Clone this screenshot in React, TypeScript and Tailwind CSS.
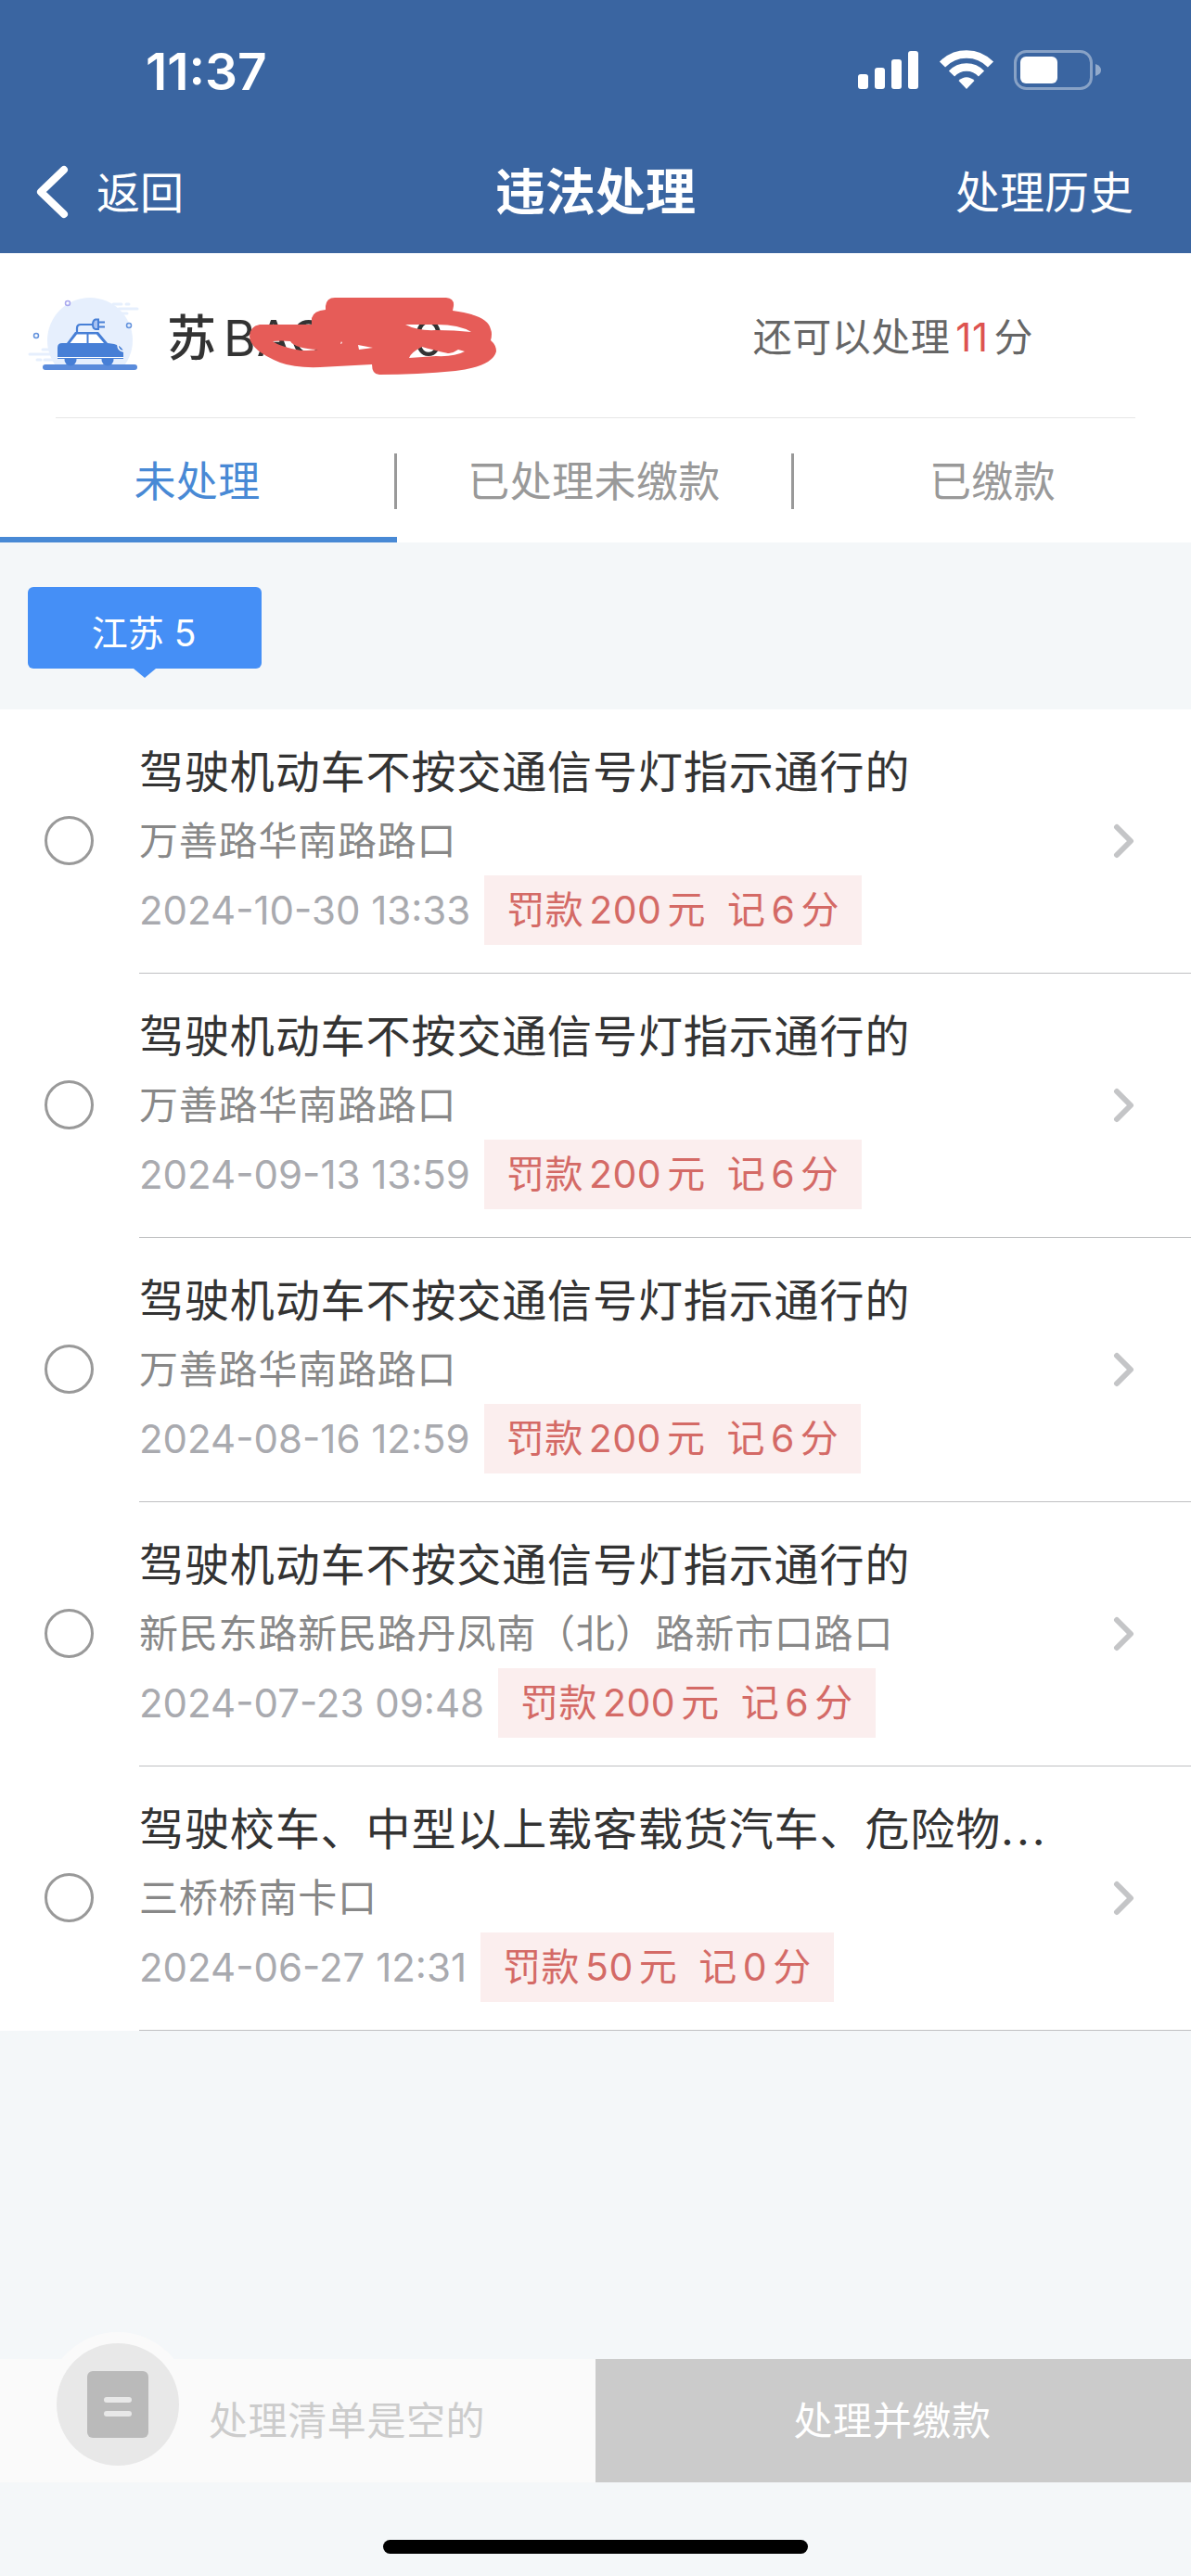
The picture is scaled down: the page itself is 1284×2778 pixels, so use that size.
import React from "react";

const records = [
  { title: "驾驶机动车不按交通信号灯指示通行的", place: "万善路华南路路口", time: "2024-10-30 13:33", fine: "200", points: "6" },
  { title: "驾驶机动车不按交通信号灯指示通行的", place: "万善路华南路路口", time: "2024-09-13 13:59", fine: "200", points: "6" },
  { title: "驾驶机动车不按交通信号灯指示通行的", place: "万善路华南路路口", time: "2024-08-16 12:59", fine: "200", points: "6" },
  { title: "驾驶机动车不按交通信号灯指示通行的", place: "新民东路新民路丹凤南（北）路新市口路口", time: "2024-07-23 09:48", fine: "200", points: "6" },
  { title: "驾驶校车、中型以上载客载货汽车、危险物", more: true, place: "三桥桥南卡口", time: "2024-06-27 12:31", fine: "50", points: "0" },
];

function StatusIcons() {
  return (
    <svg width="264" height="44" viewBox="0 0 264 44" fill="#fff">
      {/* signal */}
      <rect x="0" y="26" width="11" height="16" rx="3" />
      <rect x="18" y="19" width="11" height="23" rx="3" />
      <rect x="36" y="10" width="11" height="32" rx="3" />
      <rect x="54" y="1" width="11" height="41" rx="3" />
      {/* wifi */}
      <g fill="none" stroke="#fff" strokeWidth="8.5">
        <path d="M91 15.500 A36 36 0 0 1 143 15.500" />
        <path d="M101 25.500 A22 22 0 0 1 133 25.500" />
      </g>
      <path d="M117 42 L108.500 33 Q117 25.500 125.500 33 Z" />
      {/* battery */}
      <rect x="169.500" y="1.500" width="82" height="40" rx="12" fill="none" stroke="#fff" strokeOpacity="0.4" strokeWidth="3" />
      <rect x="175" y="7" width="40" height="29" rx="6" />
      <path d="M256 15 Q262 17 262 21.500 Q262 26 256 28 Z" fillOpacity="0.45" />
    </svg>
  );
}

function CarIcon() {
  return (
    <svg width="120" height="84" viewBox="30 320 120 84" fill="none">
      <circle cx="97" cy="367" r="46" fill="#e6effd" />
      <g stroke="#e6effd" strokeWidth="3" strokeLinecap="round">
        <path d="M122 328h9M136 328h3M128 333h20M130 338h7M32 382h28M40 388h4M48 388h10M46 377h10" />
      </g>
      <path d="M30 399h120v5H30z" fill="#fff" />
      <rect x="46" y="393" width="102" height="6" rx="3" fill="#5a8bdb" />
      <circle cx="76" cy="388" r="6.500" fill="#477fd6" />
      <circle cx="116" cy="388" r="6.500" fill="#477fd6" />
      <path d="M62 387V375q0-5 5-5h5l9-12h25l10 12q16 1 17 10v7z" fill="#477fd6" />
      <path d="M75.500 370l7.500-9.500h10.500v9.500zM95.500 370v-9.500h8.500l8 9.500z" fill="#fff" />
      <path d="M62 385.500h71" stroke="#fff" strokeWidth="1" />
      <path d="M127 372q0 6 6 7" stroke="#fff" strokeWidth="1.500" />
      <path d="M83 359v-5q0-4 4-4h13" stroke="#477fd6" strokeWidth="2.200" />
      <path d="M106 344.500h-3q-3 1-3 5.500t3 5h3z" fill="#a9c3f3" stroke="#477fd6" strokeWidth="2" />
      <path d="M107 347.500h6M107 352.500h6" stroke="#477fd6" strokeWidth="2" />
      <circle cx="73" cy="327" r="2.500" stroke="#a9a8ee" strokeWidth="1.500" />
      <circle cx="139" cy="351" r="2.500" stroke="#6493dd" strokeWidth="1.500" />
      <circle cx="39" cy="362" r="2.500" stroke="#6493dd" strokeWidth="1.500" />
    </svg>
  );
}

function Scribble() {
  return (
    <svg className="absolute -top-[21px] left-[87px]" width="270" height="86" viewBox="267 320 270 86">
      <path
        fill="#e65c58"
        fillRule="evenodd"
        d="M269 363Q269 352 280 350L336 350V343Q338 335 351 334V330Q352 321 361 321H481Q490 322 489 330L488 335Q526 340 529 355Q531 360 529 367Q535 372 535 379Q531 395 491 400Q450 404 409 404Q401 404 401 393L345 396Q318 397 302 391Q270 378 269 363Z
        M294 368Q302 374 325 378Q336 378 343 377Q318 376 313 368Q303 367 294 368Z
        M368 368L367 371L369 370Z
        M386 372L387 377L402 375Z
        M437 350Q450 357 470 356Q490 356 508 358Q495 350 471 350Z
        M441 386Q443 380 455 374Q480 381 484 381Q490 380 494 377L501 379Q490 385 470 384Z"
      />
    </svg>
  );
}

function RecordRow({ item }: { item: (typeof records)[number] }) {
  return (
    <li className="flex h-[285px] pl-12">
      <div className="flex w-[102px] shrink-0 items-center pb-0.5">
        <span className="size-[53px] rounded-full border-3 border-[#999]" />
      </div>
      <div className="flex flex-1 items-center border-b border-[#bfc0c2] pr-[61px]">
        <div className="flex-1 pt-px">
          <h3 className="text-[48px] leading-[74px] tracking-[0.9px] text-[#333]">
            {item.title}
            {item.more && <span className="tracking-[3px]">...</span>}
          </h3>
          <p className="text-[42px] leading-[74px] tracking-[0.8px] text-[#888]">{item.place}</p>
          <div className="flex items-center gap-[15px] leading-[75px]">
            <time className="text-[42px] text-[#a9aaaf]">{item.time}</time>
            <span className="flex bg-[#fbeeee] px-6 text-[41px] tracking-[0.5px] text-[#d46a66]">
              <span>罚款</span>
              <span className="mx-1.5">{item.fine}</span>
              <span>元</span>
              <span className="ml-[23px]">记</span>
              <span className="mx-1.5">{item.points}</span>
              <span>分</span>
            </span>
          </div>
        </div>
        <svg width="24" height="38" viewBox="0 0 24 38" fill="none" stroke="#c4c5c7" strokeWidth="6" strokeLinecap="round" strokeLinejoin="round">
          <path d="M5 4L20 19L5 34" />
        </svg>
      </div>
    </li>
  );
}

export default function App() {
  return (
    <div className="flex h-[2778px] w-[1284px] flex-col overflow-hidden bg-[#f4f7f9] font-['Inter','Noto_Sans_CJK_SC',sans-serif] whitespace-nowrap">
      <header className="h-[273px] bg-[#3a65a1] text-white">
        <div className="flex h-[152px] items-center justify-between pr-[95px] pl-[157px]">
          <span className="pt-0.5 text-[55px] font-semibold">11:37</span>
          <StatusIcons />
        </div>
        <div className="flex h-[112px] items-center pr-[62px] pl-9">
          <div className="flex flex-1 items-center gap-[26px]">
            <svg width="42" height="60" viewBox="0 0 42 60" fill="none" stroke="#fff" strokeWidth="8" strokeLinecap="round" strokeLinejoin="round">
              <path d="M33 5L8 29L33 53" />
            </svg>
            <span className="text-[47px]">返回</span>
          </div>
          <h1 className="-mr-[26px] pb-0.5 text-center text-[54px] font-bold">违法处理</h1>
          <span className="flex-1 text-right text-[48px]">处理历史</span>
        </div>
      </header>

      <section className="bg-white">
        <div className="mx-[30px] flex h-[177px] items-center justify-between">
          <div className="flex items-center">
            <CarIcon />
            <div className="relative top-[3px] ml-[30px] flex items-center text-[53px] leading-[48px] text-[#333]">
              <span className="font-medium">苏</span>
              <span className="ml-2 tracking-[1px]">BAC</span>
              <span className="ml-[93px]">0</span>
              <Scribble />
            </div>
          </div>
          <p className="mr-[140px] pt-1 text-[42px] tracking-[0.5px] text-[#666]">
            还可以处理<span className="mx-1.5 text-[#dd5350]">11</span>分
          </p>
        </div>
        <div className="mx-[60px] h-px bg-[#e6e6e6]" />
        <nav className="flex h-[134px] text-[45px] tracking-[0.4px] text-[#999]">
          <div className="flex w-[428px] items-center border-b-6 border-[#4889d5] text-[#4889d5]">
            <span className="flex-1 pt-2.5 text-center">未处理</span>
            <span className="mt-2 h-[60px] w-[3px] bg-[#999]" />
          </div>
          <div className="flex w-[428px] items-center pb-1.5">
            <span className="flex-1 pt-2.5 text-center">已处理未缴款</span>
            <span className="mt-2 h-[60px] w-[3px] bg-[#999]" />
          </div>
          <div className="flex w-[428px] items-center pb-1.5">
            <span className="flex-1 pt-2.5 text-center">已缴款</span>
          </div>
        </nav>
      </section>

      <div className="h-[180px] pt-12 pl-[30px]">
        <div className="flex h-[88px] w-[252px] items-center justify-center rounded-md bg-[#458ff6] pt-3 pr-0.5 text-[39px] text-white">江苏 5</div>
        <svg className="ml-[114px]" width="24" height="10" fill="#458ff6">
          <path d="M0 0H24L12 10Z" />
        </svg>
      </div>

      <ul className="bg-white">
        {records.map((item, idx) => (
          <RecordRow key={idx} item={item} />
        ))}
      </ul>

      <footer className="mt-auto">
        <div className="flex h-[133px] text-[42px]">
          <div className="relative flex w-1/2 items-center bg-[#fafafa] pl-[225px] text-[#ccc]">
            <div className="absolute -top-[29px] left-[49px] flex size-[156px] items-center justify-center rounded-full bg-[#fafafa]">
              <div className="flex size-[132px] items-center justify-center rounded-full bg-[#e8e8e8]">
                <div className="flex h-[72px] w-[66px] flex-col items-center justify-center gap-[9px] rounded-md bg-[#bababa] pt-1">
                  <span className="h-1.5 w-[30px] rounded-full bg-[#e8e8e8]" />
                  <span className="h-1.5 w-[30px] rounded-full bg-[#e8e8e8]" />
                </div>
              </div>
            </div>
            <span className="tracking-[0.6px]">处理清单是空的</span>
          </div>
          <div className="flex w-1/2 items-center justify-center bg-[#cbcbcb] pr-0.5 tracking-[0.6px] text-white">处理并缴款</div>
        </div>
        <div className="flex h-[101px] justify-center pt-[62px]">
          <div className="h-[15px] w-[458px] rounded-full bg-black" />
        </div>
      </footer>
    </div>
  );
}
